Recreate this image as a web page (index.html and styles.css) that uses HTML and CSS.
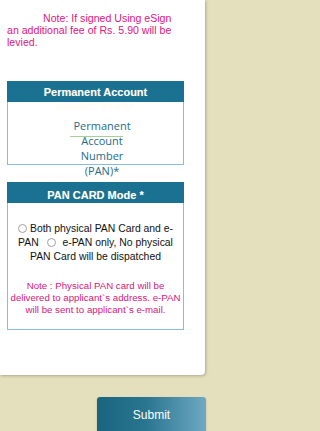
FILE: index.html
```html
<!DOCTYPE html>
<html>
<head>
<meta charset="utf-8">
<link rel="stylesheet" href="styles.css">
</head>
<body>
<div class="card">
  <p class="fee-note">Note: If signed Using eSign an additional fee of Rs. 5.90 will be levied.</p>

  <div class="panel">
    <div class="panel-head head-two">Permanent Account Number (PAN)*</div>
    <div class="panel-body pan-body">
      <div class="pan-label">Permanent Account Number (PAN)*</div>
      <span class="pan-input"></span>
    </div>
  </div>

  <div class="panel panel-mode">
    <div class="panel-head head-one">PAN CARD Mode *</div>
    <div class="panel-body mode-body">
      <div class="mode-options"><input type="radio" name="mode" class="radio radio-first">Both physical PAN Card and e-PAN <input type="radio" name="mode" class="radio radio-second"> e-PAN only, No physical PAN Card will be dispatched</div>
      <div class="mode-note">Note : Physical PAN card will be delivered to applicant`s address. e-PAN will be sent to applicant`s e-mail.</div>
    </div>
  </div>
</div>
<div class="actions">
  <button class="submit">Submit</button>
</div>
</body>
</html>
```

FILE: styles.css
```css
html, body {
  margin: 0;
  padding: 0;
}
body {
  background: #e4e0bd;
  font-family: "Liberation Sans", Arial, sans-serif;
  width: 213px;
  height: 431px;
  overflow: hidden;
}
.card {
  width: 205px;
  height: 375px;
  box-sizing: border-box;
  background: #ffffff;
  border-bottom-right-radius: 4px;
  box-shadow: 1px 1px 3px rgba(0, 0, 0, 0.25);
  padding: 12px 22px 0 7px;
}
.fee-note {
  margin: 0;
  width: 176px;
  font-size: 10.6px;
  line-height: 12px;
  color: #e2157c;
  text-indent: 36px;
}
.panel {
  margin-top: 33px;
  width: 177px;
}
.panel-mode {
  margin-top: 17px;
}
.panel-head {
  height: 21px;
  box-sizing: border-box;
  background: #1a7191;
  color: #ffffff;
  font-weight: bold;
  font-size: 11px;
  text-align: center;
  padding-left: 20px;
  padding-right: 20px;
  text-shadow: 0 0 1px rgba(235, 220, 150, 0.35);
}
.head-two {
  padding-top: 4px;
  line-height: 14px;
}
.head-one {
  padding-top: 7px;
  line-height: 13px;
}
.panel-body {
  border: 1px solid #86bde0;
  border-top: none;
  background: transparent;
}
.pan-body {
  position: relative;
  height: 63px;
  box-sizing: border-box;
  padding-top: 16px;
}
.pan-label {
  width: 62px;
  margin-left: 63px;
  text-align: center;
  font-family: "Open Sans", sans-serif;
  font-size: 11px;
  line-height: 15px;
  color: #1f6b8c;
}
.pan-input {
  position: absolute;
  left: 62px;
  top: 34px;
  width: 53px;
  height: 1px;
  background: #a8d091;
}
.mode-body {
  padding: 19px 0 13px;
}
.mode-options {
  padding: 0 5px;
  text-align: center;
  font-size: 10.4px;
  line-height: 14px;
  color: #111111;
}
.radio {
  -webkit-appearance: none;
  appearance: none;
  width: 9px;
  height: 9px;
  border: 1px solid #a0a0a0;
  border-radius: 50%;
  background: #ffffff;
  box-sizing: border-box;
  vertical-align: -1px;
  margin: 0;
}
.radio-first {
  margin-right: 3px;
}
.radio-second {
  margin-left: 5px;
  margin-right: 4px;
}
.mode-note {
  margin-top: 16px;
  padding: 0 1px;
  text-align: center;
  font-size: 9.7px;
  line-height: 12px;
  color: #d9157a;
}
.actions {
  display: flex;
  justify-content: flex-end;
  padding: 22px 7px 0 0;
}
.submit {
  width: 109px;
  height: 36px;
  border: none;
  border-radius: 3px;
  background: linear-gradient(90deg, #196580 0%, #2a7590 45%, #6ea9c2 100%);
  color: #ffffff;
  font-family: "Liberation Sans", Arial, sans-serif;
  font-size: 12px;
  padding: 0;
  box-shadow: 0 1px 2px rgba(0, 0, 0, 0.2);
}
```
